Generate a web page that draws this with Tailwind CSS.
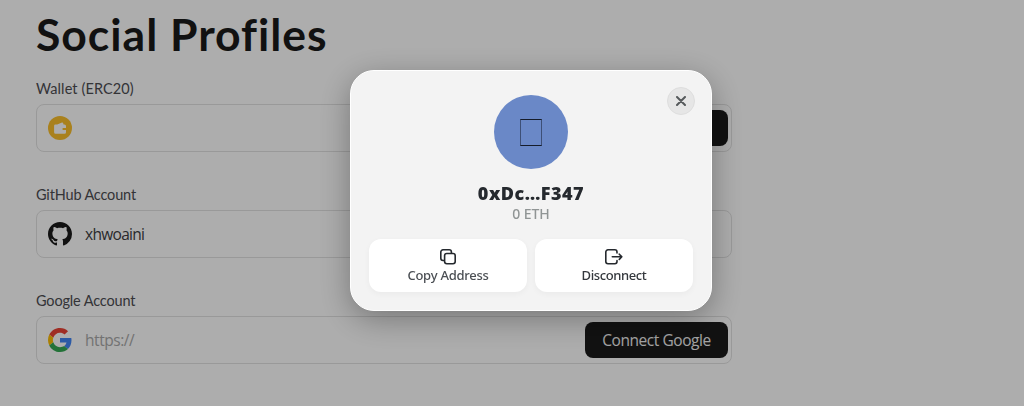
<!DOCTYPE html>
<html lang="en">
<head>
<meta charset="utf-8">
<title>Social Profiles</title>
<script src="https://cdn.jsdelivr.net/npm/@tailwindcss/browser@4"></script>
</head>
<body class="h-[406px] overflow-hidden bg-white font-['Open_Sans',sans-serif]">
<main class="w-[732px] pl-9 pt-1">
  <h1 class="h-[60px] whitespace-nowrap font-['Lato',sans-serif] text-[44.5px] leading-[60px] font-bold tracking-[0.98px] text-[#1a1a1a]">Social Profiles</h1>
  <section class="mt-[14px] h-[106px]">
    <div class="h-[26px] whitespace-nowrap font-['Lato',sans-serif] text-[14.5px] leading-[21px] tracking-[0.1px] text-[#4d4d52]">Wallet (ERC20)</div>
    <div class="flex h-12 items-center rounded-[8px] border border-[#e2e2e2] pl-[11px] pr-[3px]">
      <svg class="size-6" viewBox="0 0 24 24"><circle cx="12" cy="12" r="12" fill="#f9be2c"/><path fill="#fff" d="M7.400 8.500h1.800l4.800-1.900q.9-.2 1.200.7l.3 1.200h1q1.500 0 1.500 1.500v6.300q0 1.500-1.500 1.500H7.600q-1.500 0-1.500-1.500V9.800q0-1.300 1.300-1.300z"/><path fill="#f9be2c" d="M18 12h-2.600a1 1 0 0 0 0 2H18z"/></svg>
      <div class="ml-auto h-9 w-[143px] rounded-lg bg-[#1a1a1a]"></div>
    </div>
  </section>
  <section class="h-[106px]">
    <div class="h-[26px] whitespace-nowrap font-['Lato',sans-serif] text-[14.5px] leading-[21px] tracking-[-0.17px] text-[#4d4d52]">GitHub Account</div>
    <div class="flex h-12 items-center rounded-[8px] border border-[#e2e2e2] pl-[11px] pr-[3px]">
      <svg class="size-6" viewBox="0 0 16 16" fill="#1a1a1a"><path d="M8 0C3.58 0 0 3.58 0 8c0 3.54 2.29 6.53 5.47 7.59.4.07.55-.17.55-.38 0-.19-.01-.82-.01-1.49-2.01.37-2.53-.49-2.69-.94-.09-.23-.48-.94-.82-1.13-.28-.15-.68-.52-.01-.53.63-.01 1.08.58 1.23.82.72 1.21 1.87.87 2.33.66.07-.52.28-.87.51-1.07-1.78-.2-3.64-.89-3.64-3.95 0-.87.31-1.59.82-2.15-.08-.2-.36-1.02.08-2.12 0 0 .67-.21 2.2.82.64-.18 1.32-.27 2-.27s1.36.09 2 .27c1.53-1.04 2.2-.82 2.2-.82.44 1.1.16 1.92.08 2.12.51.56.82 1.27.82 2.15 0 3.07-1.87 3.75-3.65 3.95.29.25.54.73.54 1.48 0 1.07-.01 1.93-.01 2.2 0 .21.15.46.55.38A8 8 0 0 0 16 8c0-4.42-3.58-8-8-8Z"/></svg>
      <span class="ml-[13px] pt-0.5 text-[15.5px] tracking-[-0.7px] text-[#3d3d42]">xhwoaini</span>
    </div>
  </section>
  <section>
    <div class="h-[26px] whitespace-nowrap font-['Lato',sans-serif] text-[14.5px] leading-[21px] tracking-[-0.15px] text-[#4d4d52]">Google Account</div>
    <div class="flex h-12 items-center rounded-[8px] border border-[#e2e2e2] pl-[11px] pr-[3px]">
      <svg class="size-6" viewBox="0 0 48 48"><path fill="#EA4335" d="M24 9.5c3.54 0 6.71 1.22 9.21 3.6l6.85-6.85C35.9 2.38 30.47 0 24 0 14.62 0 6.51 5.38 2.56 13.22l7.98 6.19C12.43 13.72 17.74 9.5 24 9.5z"/><path fill="#4285F4" d="M46.98 24.55c0-1.57-.15-3.09-.38-4.55H24v9.02h12.94c-.58 2.96-2.26 5.48-4.78 7.18l7.73 6c4.51-4.18 7.09-10.36 7.09-17.65z"/><path fill="#FBBC05" d="M10.53 28.59A14.5 14.5 0 0 1 9.77 24c0-1.6.27-3.14.76-4.59l-7.98-6.19A24 24 0 0 0 0 24c0 3.88.92 7.54 2.56 10.78z"/><path fill="#34A853" d="M24 48c6.48 0 11.93-2.13 15.89-5.81l-7.73-6c-2.15 1.45-4.92 2.3-8.16 2.3-6.26 0-11.57-4.22-13.47-9.91l-7.98 6.19C6.51 42.62 14.62 48 24 48z"/></svg>
      <span class="ml-[13px] pt-0.5 text-[15.5px] tracking-[-0.45px] text-[#a9a9a9]">https://</span>
      <div class="ml-auto flex h-9 w-[143px] items-center justify-center whitespace-nowrap rounded-lg bg-[#1a1a1a] pt-px text-[15.5px] tracking-[-0.45px] text-[#f2f2f2]">Connect Google</div>
    </div>
  </section>
</main>
<div class="fixed inset-0 bg-black/32"></div>
<div class="fixed left-[350px] top-[70px] flex h-[241px] w-[362px] flex-col items-center rounded-3xl border border-white bg-[#f3f3f3] pt-6 shadow-[0_8px_32px_rgba(0,0,0,0.32)]">
  <button class="absolute right-4 top-4 flex size-7 items-center justify-center rounded-full border border-[#dedede] bg-[#e6e6e6]">
    <svg class="size-[10px]" viewBox="0 0 10 10" fill="none" stroke="#55595b" stroke-width="2" stroke-linecap="round"><path d="m1 1 8 8M9 1 1 9"/></svg>
  </button>
  <div class="flex size-[74px] shrink-0 items-center justify-center rounded-full bg-[#6a88c7]"><div class="h-[27px] w-[22px] border border-x-[#3d4f76] border-y-[#151c2a]"></div></div>
  <div class="mt-3 h-6 whitespace-nowrap font-['Noto_Sans',sans-serif] text-[18px] leading-6 font-black tracking-[0.5px] text-[#25292e]">0xDc…F347</div>
  <div class="h-[18px] whitespace-nowrap font-['Noto_Sans',sans-serif] text-[14px] leading-[18px] font-medium tracking-[-0.1px] text-[#909595]">0 ETH</div>
  <div class="mt-4 flex gap-2 font-['Noto_Sans',sans-serif] text-[13px] leading-[18px] font-medium tracking-[-0.25px]">
    <button class="flex h-[53px] w-[158px] flex-col items-center rounded-xl bg-white pt-[9px] text-[#4b4f54] shadow-[0_2px_6px_rgba(0,0,0,0.04)]">
      <svg class="h-[18px] w-[18px] shrink-0" viewBox="0 0 18 18" fill="none" stroke="#25292e" stroke-width="1.6"><rect x="5.600" y="5.500" width="10.600" height="10.300" rx="2.200"/><path d="M5.500 12.500H4A2.200 2.200 0 0 1 1.800 10.300V4A2.200 2.200 0 0 1 4 1.800h6.200a2.200 2.200 0 0 1 2.200 2.200v1.500"/></svg>
      <span class="whitespace-nowrap">Copy Address</span>
    </button>
    <button class="flex h-[53px] w-[158px] flex-col items-center rounded-xl bg-white pt-[9px] text-[#34383d] shadow-[0_2px_6px_rgba(0,0,0,0.04)]">
      <svg class="h-[18px] w-[18px] shrink-0" viewBox="0 0 18 18" fill="none" stroke="#25292e" stroke-width="1.6" stroke-linecap="round" stroke-linejoin="round"><path d="M12 5V4a2.200 2.200 0 0 0-2.200-2.200H3A2.200 2.200 0 0 0 .8 4v9.500A2.200 2.200 0 0 0 3 15.700h6.800a2.200 2.200 0 0 0 2.200-2.200v-1M7.300 8.800h9.300M14.300 6.200l2.500 2.600-2.500 2.600"/></svg>
      <span class="whitespace-nowrap tracking-[-0.4px]">Disconnect</span>
    </button>
  </div>
</div>
</body>
</html>
